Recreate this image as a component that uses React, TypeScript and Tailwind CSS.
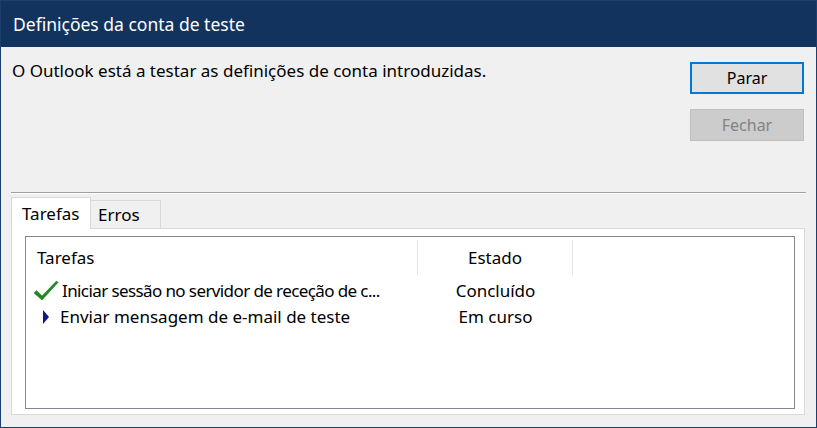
import React from "react";

const font = { fontFamily: '"Noto Sans", "Open Sans", sans-serif' };

const CheckIcon = () => (
  <svg width="26" height="22" viewBox="0 0 26 22" className="shrink-0">
    <path d="M1 13 L3.5 10.5 L9 16 L23.5 1 L25 2.5 L9 20 Z" fill="#1f8a1f" stroke="#0f6a0f" strokeWidth="0.5" />
  </svg>
);

const Arrow = () => (
  <svg width="8" height="14" viewBox="0 0 8 14" className="shrink-0">
    <path d="M1 0 L7 7 L1 14 Z" fill="#0a1a80" />
  </svg>
);

export default function App() {
  return (
    <div
      className="w-[817px] h-[428px] bg-[#f0f0f0] border border-[#1c3f6e] flex flex-col text-[#000] overflow-hidden"
      style={font}
    >
      {/* title bar */}
      <div className="h-[46px] bg-[#13335f] flex items-center px-[12px] text-[17.5px] text-white shrink-0">
        Definições da conta de teste
      </div>

      {/* top area */}
      <div className="flex pl-[11px] pr-[12px] pt-[13px]">
        <div className="flex-1 text-[17px] leading-[22px]">
          O Outlook está a testar as definições de conta introduzidas.
        </div>
        <div className="flex flex-col gap-[15px] pt-[2px]">
          <button className="w-[114px] h-[32px] bg-[#e1e1e1] border-2 border-[#0078d7] text-[16px] leading-none">
            Parar
          </button>
          <button
            disabled
            className="w-[114px] h-[32px] bg-[#cccccc] border border-[#bfbfbf] text-[16px] text-[#838383] leading-none"
          >
            Fechar
          </button>
        </div>
      </div>

      {/* separator */}
      <div className="mx-[10px] mt-[51px] h-[2px] border-t border-[#a0a0a0] border-b border-b-white" />

      {/* tabs */}
      <div className="mx-[10px] mt-[3px] flex flex-col flex-1 mb-[12px] text-[17px]">
        <div className="flex items-end h-[32px] relative z-10">
          <div className="h-[32px] w-[80px] pl-[10px] bg-white border border-b-0 border-[#d9d9d9] flex items-center">
            Tarefas
          </div>
          <div className="h-[29px] w-[70px] pl-[7px] bg-[#f0f0f0] border border-l-0 border-[#d9d9d9] flex items-center">
            Erros
          </div>
        </div>
        <div className="-mt-[1px] flex-1 bg-white border border-[#d9d9d9] w-[794px] pt-[7px] pl-[13px] pr-[9px] pb-[5px] flex">
          <div className="flex-1 border border-[#828790] bg-white flex flex-col">
            {/* header */}
            <div className="flex h-[38px] pt-[3px]">
              <div className="w-[392px] pl-[11px] flex items-center border-r border-[#e5e5e5]">Tarefas</div>
              <div className="w-[155px] flex items-center justify-center border-r border-[#e5e5e5]">Estado</div>
            </div>
            {/* rows */}
            <div className="flex h-[26px] items-center mt-[3px]">
              <div className="w-[392px] pl-[7px] flex items-center gap-[3px] whitespace-nowrap">
                <CheckIcon />
                <span className="tracking-[-0.6px]">Iniciar sessão no servidor de receção de c...</span>
              </div>
              <div className="w-[155px] text-center">Concluído</div>
            </div>
            <div className="flex h-[26px] items-center">
              <div className="w-[392px] pl-[16px] flex items-center gap-[10px] whitespace-nowrap">
                <Arrow />
                <span>Enviar mensagem de e-mail de teste</span>
              </div>
              <div className="w-[155px] text-center">Em curso</div>
            </div>
          </div>
        </div>
      </div>
    </div>
  );
}
